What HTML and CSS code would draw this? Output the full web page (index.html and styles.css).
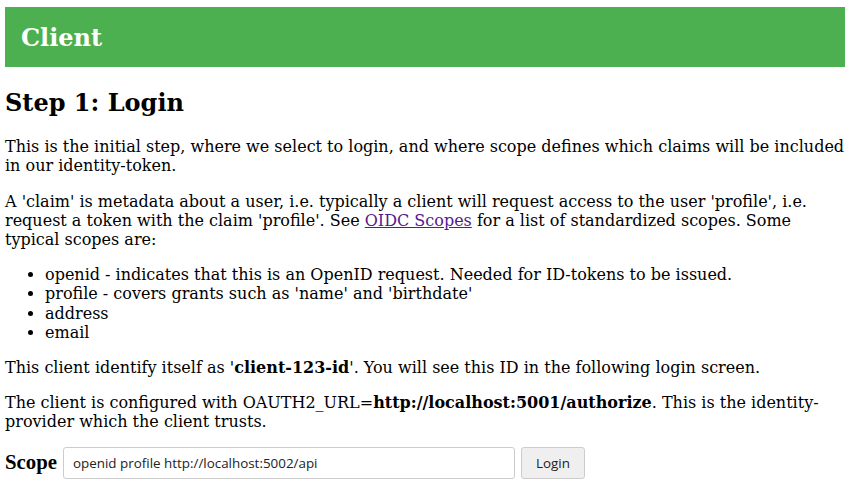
FILE: index.html
```html
<!DOCTYPE html>
<html>
<head>
<meta charset="utf-8">
<link rel="stylesheet" href="styles.css">
</head>
<body>
<header class="topbar">Client</header>
<main class="content">
  <h1 class="title">Step 1: Login</h1>
  <p>This is the initial step, where we select to login, and where scope defines which claims will be included in our identity-token.</p>
  <p>A 'claim' is metadata about a user, i.e. typically a client will request access to the user 'profile', i.e. request a token with the claim 'profile'. See <a href="#">OIDC Scopes</a> for a list of standardized scopes. Some typical scopes are:</p>
  <ul class="scopes">
    <li>openid - indicates that this is an OpenID request. Needed for ID-tokens to be issued.</li>
    <li>profile - covers grants such as 'name' and 'birthdate'</li>
    <li>address</li>
    <li>email</li>
  </ul>
  <p>This client identify itself as '<b>client-123-id</b>'. You will see this ID in the following login screen.</p>
  <p>The client is configured with OAUTH2_URL=<b>http://localhost:5001/authorize</b>. This is the identity-provider which the client trusts.</p>
  <form class="login-form">
    <label class="scope-label">Scope</label>
    <input class="scope-input" type="text" value="openid profile http://localhost:5002/api">
    <button class="login-btn" type="button">Login</button>
  </form>
</main>
</body>
</html>
```
FILE: styles.css
```css
html, body {
  margin: 0;
  padding: 0;
}
body {
  padding: 7px 5px 0 5px;
  font-family: "DejaVu Serif", serif;
  font-size: 16px;
  line-height: 1.2;
  color: #000;
  background: #fff;
}
.topbar {
  background: #4caf50;
  color: #fff;
  font-weight: bold;
  font-size: 24px;
  height: 60px;
  line-height: 61px;
  padding-left: 16px;
}
.title {
  font-size: 24px;
  margin: 22px 0 19.5px 0;
  line-height: 1.2;
}
p {
  margin: 0 0 16px 0;
}
a {
  color: #551a8b;
}
.scopes {
  margin: 0 0 16px 0;
  padding-left: 40px;
}
.login-form {
  display: flex;
  align-items: center;
  gap: 6px;
  margin-top: -1px;
}
.scope-label {
  font-family: "Liberation Serif", serif;
  font-weight: bold;
  font-size: 20.8px;
}
.scope-input {
  width: 452px;
  height: 32px;
  box-sizing: border-box;
  border: 1px solid #ccc;
  border-radius: 3px;
  padding: 0 9px;
  font-family: "Open Sans", sans-serif;
  font-size: 13.4px;
  color: #222;
  background: #fff;
}
.login-btn {
  width: 64px;
  height: 32px;
  box-sizing: border-box;
  border: 1px solid #ccc;
  border-radius: 3px;
  background: #efefef;
  font-family: "Open Sans", sans-serif;
  font-size: 13.4px;
  color: #222;
}
```
